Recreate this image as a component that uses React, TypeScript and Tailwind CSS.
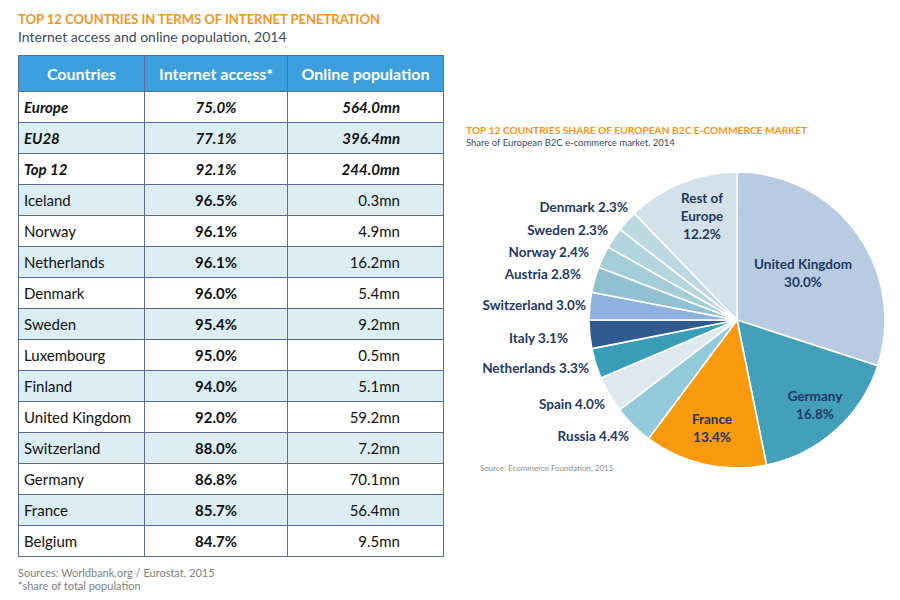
const FONT = "font-['Lato','Liberation_Sans',sans-serif]";

type Row = { name: string; access: string; pop: string; total?: boolean };

const ROWS: Row[] = [
  { name: "Europe", access: "75.0%", pop: "564.0mn", total: true },
  { name: "EU28", access: "77.1%", pop: "396.4mn", total: true },
  { name: "Top 12", access: "92.1%", pop: "244.0mn", total: true },
  { name: "Iceland", access: "96.5%", pop: "0.3mn" },
  { name: "Norway", access: "96.1%", pop: "4.9mn" },
  { name: "Netherlands", access: "96.1%", pop: "16.2mn" },
  { name: "Denmark", access: "96.0%", pop: "5.4mn" },
  { name: "Sweden", access: "95.4%", pop: "9.2mn" },
  { name: "Luxembourg", access: "95.0%", pop: "0.5mn" },
  { name: "Finland", access: "94.0%", pop: "5.1mn" },
  { name: "United Kingdom", access: "92.0%", pop: "59.2mn" },
  { name: "Switzerland", access: "88.0%", pop: "7.2mn" },
  { name: "Germany", access: "86.8%", pop: "70.1mn" },
  { name: "France", access: "85.7%", pop: "56.4mn" },
  { name: "Belgium", access: "84.7%", pop: "9.5mn" },
];

// clockwise from 12 o'clock
const SLICES = [
  { name: "United Kingdom", v: 30.0, c: "#b7cce3" },
  { name: "Germany", v: 16.8, c: "#44a0ba" },
  { name: "France", v: 13.4, c: "#f8990e" },
  { name: "Russia", v: 4.4, c: "#93cadb" },
  { name: "Spain", v: 4.0, c: "#dde9ef" },
  { name: "Netherlands", v: 3.3, c: "#3a9db8" },
  { name: "Italy", v: 3.1, c: "#2e5a8e" },
  { name: "Switzerland", v: 3.0, c: "#8eb1e0" },
  { name: "Austria", v: 2.8, c: "#8fc1d3" },
  { name: "Norway", v: 2.4, c: "#a4cdd9" },
  { name: "Sweden", v: 2.3, c: "#b3d5df" },
  { name: "Denmark", v: 2.3, c: "#bcd8e2" },
  { name: "Rest of Europe", v: 12.2, c: "#d3e2ea" },
];

const SIDE_LABELS = [
  { t: "Denmark 2.3%", x: 628, y: 207 },
  { t: "Sweden 2.3%", x: 608, y: 230 },
  { t: "Norway 2.4%", x: 589, y: 252 },
  { t: "Austria 2.8%", x: 581, y: 274 },
  { t: "Switzerland 3.0%", x: 586, y: 305 },
  { t: "Italy 3.1%", x: 568, y: 338 },
  { t: "Netherlands 3.3%", x: 589, y: 368 },
  { t: "Spain 4.0%", x: 605, y: 404 },
  { t: "Russia 4.4%", x: 629, y: 436 },
];

const INNER_LABELS = [
  { lines: ["Rest of", "Europe", "12.2%"], x: 702, y: 198 },
  { lines: ["United Kingdom", "30.0%"], x: 803, y: 264 },
  { lines: ["Germany", "16.8%"], x: 815, y: 396 },
  { lines: ["France", "13.4%"], x: 712, y: 419 },
];

const CX = 737;
const CY = 320;
const R = 148;

function slicePath(a0: number, a1: number) {
  const p = (a: number) => {
    const r = (a * Math.PI) / 180;
    return [CX + R * Math.sin(r), CY - R * Math.cos(r)];
  };
  const [x0, y0] = p(a0);
  const [x1, y1] = p(a1);
  const large = a1 - a0 > 180 ? 1 : 0;
  return `M${CX},${CY} L${x0},${y0} A${R},${R} 0 ${large} 1 ${x1},${y1} Z`;
}

function PieChart() {
  let acc = 0;
  return (
    <svg width={434} height={333} viewBox="466 149 434 333" className="block">
      {SLICES.map((s) => {
        const a0 = acc * 3.6;
        acc += s.v;
        const a1 = acc * 3.6;
        return (
          <path key={s.name} d={slicePath(a0, a1)} fill={s.c} stroke="#ffffff" strokeWidth={1.6} strokeLinejoin="round" />
        );
      })}
      <g fontFamily="Lato, 'Liberation Sans', sans-serif" fontWeight={700} fontSize={13.5} fill="#1f3864">
        {SIDE_LABELS.map((l) => (
          <text key={l.t} x={l.x} y={l.y + 5} textAnchor="end">
            {l.t}
          </text>
        ))}
        {INNER_LABELS.map((l) => (
          <text key={l.lines[0]} x={l.x} textAnchor="middle">
            {l.lines.map((ln, i) => (
              <tspan key={i} x={l.x} y={l.y + 5 + i * 18}>
                {ln}
              </tspan>
            ))}
          </text>
        ))}
      </g>
      <text x={480} y={471} fontFamily="Lato, 'Liberation Sans', sans-serif" fontSize={8} fill="#8c8c8c">
        Source: Ecommerce Foundation, 2015
      </text>
    </svg>
  );
}

export default function App() {
  return (
    <div className={`w-[900px] h-[600px] bg-white flex ${FONT}`}>
      {/* Left: internet penetration table */}
      <div className="w-[448px] pl-[18px] pt-[10px] shrink-0">
        <h1 className="text-[13px] leading-[18px] font-bold text-[#f7941d]">
          TOP 12 COUNTRIES IN TERMS OF INTERNET PENETRATION
        </h1>
        <p className="text-[14px] leading-[18px] text-[#3d4a5c]">Internet access and online population, 2014</p>
        <table className="mt-[9px] w-[425px] border-collapse table-fixed text-[15px] text-[#111]">
          <colgroup>
            <col className="w-[126px]" />
            <col className="w-[143px]" />
            <col className="w-[156px]" />
          </colgroup>
          <thead>
            <tr className="h-[36px] bg-[#3a9fdc] text-white text-[16px] font-bold">
              <th className="border border-[#5b6a99] font-bold">Countries</th>
              <th className="border border-[#5b6a99] font-bold">Internet access*</th>
              <th className="border border-[#5b6a99] font-bold">Online population</th>
            </tr>
          </thead>
          <tbody>
            {ROWS.map((r, i) => (
              <tr key={r.name} className={`h-[31px] ${i % 2 === 1 ? "bg-[#dbeef4]" : "bg-white"} ${r.total ? "font-bold italic" : ""}`}>
                <td className="border border-[#5b6a99] pl-[5px]">{r.name}</td>
                <td className="border border-[#5b6a99] text-center font-bold">{r.access}</td>
                <td className="border border-[#5b6a99] text-right pr-[43px]">{r.pop}</td>
              </tr>
            ))}
          </tbody>
        </table>
        <div className="mt-[9px] text-[11px] leading-[13px] text-[#7f7f7f]">
          <p>Sources: Worldbank.org / Eurostat, 2015</p>
          <p>*share of total population</p>
        </div>
      </div>

      {/* Right: e-commerce pie */}
      <div className="pt-[124px] pl-[18px]">
        <h2 className="text-[10.2px] leading-[13px] font-bold text-[#f7941d]">
          TOP 12 COUNTRIES SHARE OF EUROPEAN B2C E-COMMERCE MARKET
        </h2>
        <p className="text-[9.5px] leading-[12px] text-[#3d4a5c]">Share of European B2C e-commerce market, 2014</p>
        <PieChart />
      </div>
    </div>
  );
}
